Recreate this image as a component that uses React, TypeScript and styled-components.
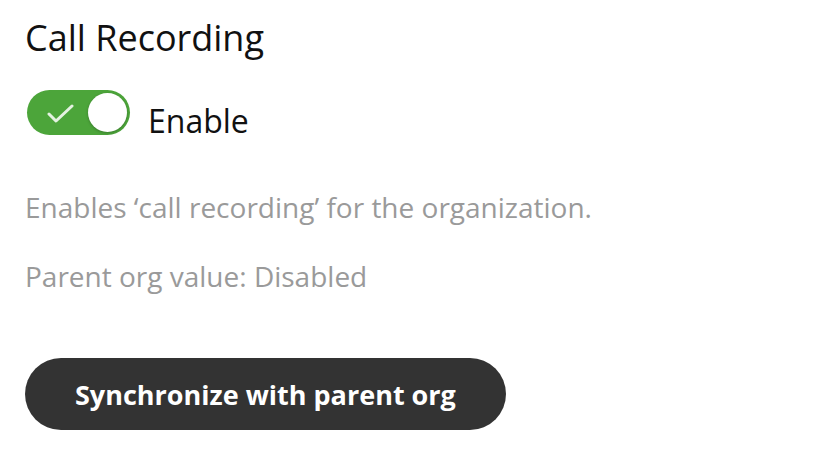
import React, { useState } from "react";
import styled, { createGlobalStyle } from "styled-components";

const GlobalStyle = createGlobalStyle`
  html, body {
    margin: 0;
    padding: 0;
    background: #ffffff;
    font-family: "Open Sans", "Noto Sans", sans-serif;
  }
`;

const Page = styled.div`
  display: flex;
  flex-direction: column;
  align-items: flex-start;
  padding: 14px 25px;
`;

const Title = styled.h2`
  margin: 0;
  font-size: 36px;
  font-weight: 400;
  line-height: 48px;
  color: #111111;
`;

const ToggleRow = styled.label`
  display: flex;
  align-items: flex-start;
  gap: 18px;
  margin-top: 28px;
  cursor: pointer;
`;

const Track = styled.span<{ $on: boolean }>`
  position: relative;
  display: inline-block;
  flex-shrink: 0;
  width: 103px;
  height: 45px;
  border-radius: 23px;
  background: ${({ $on }) => ($on ? "#4ca53a" : "#c7c7c7")};
  margin-left: 2px;
`;

const Knob = styled.span<{ $on: boolean }>`
  position: absolute;
  top: 3px;
  left: ${({ $on }) => ($on ? "61px" : "3px")};
  width: 39px;
  height: 39px;
  border-radius: 50%;
  background: #ffffff;
  box-shadow: 0 1px 3px rgba(0, 0, 0, 0.25);
  transition: left 0.15s ease;
`;

const Check = styled.svg`
  position: absolute;
  left: 20px;
  top: 14px;
`;

const ToggleLabel = styled.span`
  margin-top: 9px;
  font-size: 32px;
  line-height: 44px;
  color: #111111;
`;

const Description = styled.p`
  margin: 45px 0 0;
  font-size: 28px;
  color: #9a9a9a;
`;

const ParentValue = styled.p`
  margin: 31px 0 0;
  font-size: 28px;
  color: #9a9a9a;
`;

const SyncButton = styled.button`
  margin-top: 63px;
  height: 72px;
  padding: 0 50px;
  border: none;
  border-radius: 36px;
  background: #333333;
  color: #ffffff;
  font-family: "Open Sans", "Noto Sans", sans-serif;
  font-size: 27px;
  font-weight: 700;
  cursor: pointer;
`;

export default function App() {
  const [enabled, setEnabled] = useState(true);

  return (
    <>
      <GlobalStyle />
      <Page>
        <Title>Call Recording</Title>
        <ToggleRow onClick={() => setEnabled((v) => !v)}>
          <Track $on={enabled}>
            {enabled && (
              <Check width="27" height="19" viewBox="0 0 27 19">
                <path
                  d="M2 10 L9 17 L25 2"
                  fill="none"
                  stroke="rgba(255,255,255,0.85)"
                  strokeWidth="3"
                  strokeLinecap="round"
                  strokeLinejoin="round"
                />
              </Check>
            )}
            <Knob $on={enabled} />
          </Track>
          <ToggleLabel>Enable</ToggleLabel>
        </ToggleRow>
        <Description>Enables ‘call recording’ for the organization.</Description>
        <ParentValue>Parent org value: Disabled</ParentValue>
        <SyncButton type="button">Synchronize with parent org</SyncButton>
      </Page>
    </>
  );
}
